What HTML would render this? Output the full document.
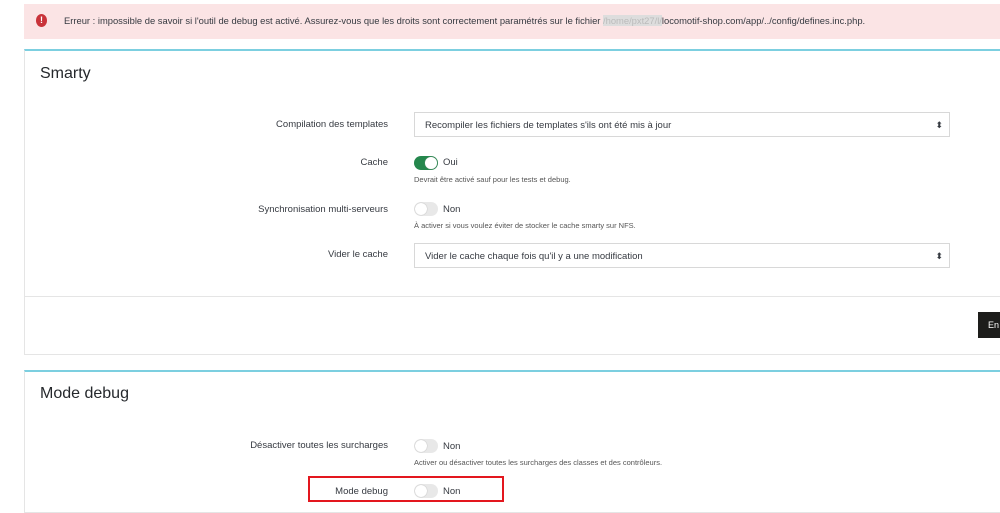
<!DOCTYPE html><html><head><style>
body{margin:0;width:1000px;height:504px;overflow:hidden;background:#fff;font-family:"Liberation Sans",sans-serif;color:#363a41;position:relative}
.a{position:absolute}
.alert{left:24px;top:4px;width:976px;height:35px;background:#fbe4e5;font-size:9.4px;color:#363a41}
.panel{left:24px;width:980px;border:1px solid #e5e5e5;border-top:2px solid #7ccfe0;background:#fff}
.lbl{font-size:9.5px;text-align:right;width:300px;left:88px}
.sel{left:414px;width:536px;height:25px;border:1px solid #d8d8d8;font-size:9.5px;line-height:25px;padding-left:10px;box-sizing:border-box;background:#fff}
.sel:after{content:"⬍";position:absolute;right:6px;top:0;font-size:9px}
.sw{left:414px;width:24px;height:14px;border-radius:8px;background:#e8e8e8}
.sw i{position:absolute;top:1px;left:1px;width:12px;height:12px;border-radius:50%;background:#fff;box-shadow:0 0 1px #999}
.on{background:#25874d}.on i{left:11px}
.t{font-size:9.5px}.h{font-size:7.5px;left:414px;color:#555}
</style></head><body>
<div class="a alert"><div class="a" style="left:12px;top:10px;width:11px;height:13px;border-radius:50%;background:#c9333a;color:#fff;font-size:9px;font-weight:bold;text-align:center;line-height:13px">!</div><div class="a" style="left:40px;top:11px;white-space:nowrap">Erreur : impossible de savoir si l'outil de debug est activé. Assurez-vous que les droits sont correctement paramétrés sur le fichier <span style="color:#bbb;background:#ddd">/home/pxt27/l/</span>locomotif-shop.com/app/../config/defines.inc.php.</div></div>
<div class="a panel" style="top:49px;height:303px"></div>
<div class="a" style="left:25px;top:296px;width:975px;height:1px;background:#e5e5e5"></div>
<div class="a" style="left:40px;top:65px;font-size:16px;color:#25282c">Smarty</div>
<div class="a lbl" style="top:119px">Compilation des templates</div>
<div class="a sel" style="top:112px">Recompiler les fichiers de templates s'ils ont été mis à jour</div>
<div class="a lbl" style="top:157px">Cache</div>
<div class="a sw on" style="top:156px"><i></i></div><div class="a t" style="left:443px;top:157px">Oui</div>
<div class="a h" style="top:175px">Devrait être activé sauf pour les tests et debug.</div>
<div class="a lbl" style="top:204px">Synchronisation multi-serveurs</div>
<div class="a sw" style="top:202px"><i></i></div><div class="a t" style="left:443px;top:204px">Non</div>
<div class="a h" style="top:221px">À activer si vous voulez éviter de stocker le cache smarty sur NFS.</div>
<div class="a lbl" style="top:249px">Vider le cache</div>
<div class="a sel" style="top:243px">Vider le cache chaque fois qu'il y a une modification</div>
<div class="a" style="left:978px;top:312px;width:30px;height:26px;background:#1d1d1b;color:#fff;font-size:9px;line-height:26px;padding-left:10px;box-sizing:border-box">En</div>
<div class="a panel" style="top:370px;height:140px"></div>
<div class="a" style="left:40px;top:385px;font-size:16px;color:#25282c">Mode debug</div>
<div class="a lbl" style="top:440px">Désactiver toutes les surcharges</div>
<div class="a sw" style="top:439px"><i></i></div><div class="a t" style="left:443px;top:441px">Non</div>
<div class="a h" style="top:458px">Activer ou désactiver toutes les surcharges des classes et des contrôleurs.</div>
<div class="a lbl" style="top:486px">Mode debug</div>
<div class="a sw" style="top:484px"><i></i></div><div class="a t" style="left:443px;top:486px">Non</div>
<div class="a" style="left:308px;top:476px;width:196px;height:26px;border:2px solid #e3171e;box-sizing:border-box"></div>
</body></html>
